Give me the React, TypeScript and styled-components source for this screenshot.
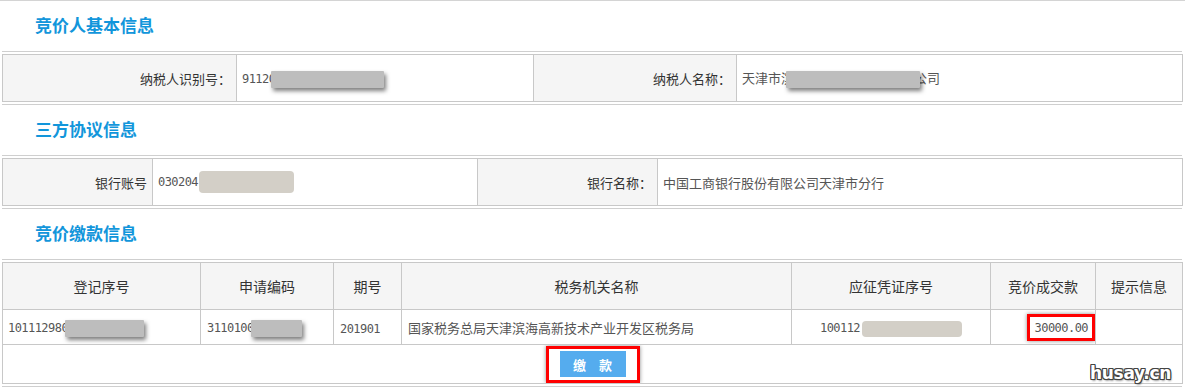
import React from "react";
import styled, { createGlobalStyle } from "styled-components";

// ______________________________________________________
// グローバル

const GlobalStyle = createGlobalStyle`
  html, body {
    margin: 0;
    padding: 0;
    background: #fff;
  }
  body {
    font-family: "Noto Sans CJK SC", "Noto Sans", sans-serif;
  }
`;

// ______________________________________________________
// スタイル

const Page = styled.div`
  position: relative;
  width: 1185px;
  height: 387px;
  box-sizing: border-box;
  overflow: hidden;
  border-top: 1px solid #d4d4d4;
`;

const Title = styled.h2`
  margin: 0;
  height: 50px;
  line-height: 48px;
  padding-left: 35px;
  font-size: 17px;
  font-weight: bold;
  color: #1296db;
`;

const Frame = styled.div`
  margin: 0 3px 0 2px;
  padding: 2px 0;
  border-top: 1px solid #cfcfcf;
  border-bottom: 1px solid #cfcfcf;
`;

const Table = styled.table`
  width: 100%;
  table-layout: fixed;
  border-collapse: collapse;
  font-size: 13px;
  color: #555;
`;

const Col = styled.col<{ $w: number }>`
  width: ${(p) => p.$w}px;
`;

const Row = styled.tr<{ $h: number }>`
  height: ${(p) => p.$h}px;
`;

const Cell = styled.td<{ $align?: "left" | "center" | "right"; $pad?: string; $top?: boolean }>`
  border: 1px solid #c8c8c8;
  padding: ${(p) => p.$pad ?? "0 5px"};
  text-align: ${(p) => p.$align ?? "left"};
  vertical-align: ${(p) => (p.$top ? "top" : "middle")};
  white-space: nowrap;
  overflow: hidden;
`;

const Label = styled(Cell)`
  background: #f5f5f5;
  color: #333;
  text-align: right;
`;

const Head = styled.th`
  border: 1px solid #c8c8c8;
  background: #f5f5f5;
  padding: 0;
  font-size: 14px;
  font-weight: normal;
  color: #333;
  text-align: center;
`;

const Num = styled.span`
  font-family: "DejaVu Sans Mono", "Liberation Mono", monospace;
  font-size: 12px;
  letter-spacing: -0.55px;
`;

const Mask = styled.span<{ $w: number; $h: number; $tone: "smoke" | "sand"; $ml?: number }>`
  display: inline-block;
  position: relative;
  vertical-align: middle;
  width: ${(p) => p.$w}px;
  height: ${(p) => p.$h}px;
  margin-left: ${(p) => p.$ml ?? 0}px;
  background: ${(p) => (p.$tone === "smoke" ? "#bdbdbd" : "#d3cfc7")};
  border-radius: ${(p) => (p.$tone === "smoke" ? "1px" : "4px")};
  box-shadow: ${(p) => (p.$tone === "smoke" ? "2px 3px 4px rgba(0,0,0,.5)" : "none")};
`;

const Marked = styled.span`
  display: inline-block;
  vertical-align: middle;
  border: 3px solid #ff0000;
  padding: 0 4px 0 5px;
  line-height: 20px;
  box-shadow: 0 0 4px rgba(0, 0, 0, 0.45);
`;

const PayFrame = styled.span`
  display: inline-block;
  margin-top: 1px;
  border: 3px solid #ff0000;
  padding: 2px 11px 3px;
  box-shadow: 0 0 4px rgba(0, 0, 0, 0.45);
`;

const PayButton = styled.button`
  display: block;
  width: 66px;
  height: 26px;
  padding: 0;
  border: 0;
  background: #55acee;
  color: #fff;
  font-family: "Noto Sans CJK SC", sans-serif;
  font-size: 13px;
  font-weight: bold;
  cursor: pointer;
`;

const Watermark = styled.div`
  position: absolute;
  right: 14px;
  bottom: 4px;
  font-family: "DejaVu Sans", "Liberation Sans", sans-serif;
  font-size: 17px;
  font-weight: bold;
  color: #fff;
  letter-spacing: -0.3px;
  text-shadow:
    1px 0 0 #444, -1px 0 0 #444, 0 1px 0 #444, 0 -1px 0 #444,
    1px 1px 0 #444, -1px -1px 0 #444, 1px -1px 0 #444, -1px 1px 0 #444,
    1px 2px 2px rgba(0, 0, 0, 0.4);
`;

// ______________________________________________________
// データ

const payCols = [198, 133, 68, 390, 199, 105, 87];
const payHeads = ["登记序号", "申请编码", "期号", "税务机关名称", "应征凭证序号", "竞价成交款", "提示信息"];

// ______________________________________________________
// コンポーネント

const App: React.FC = () => (
  <>
    <GlobalStyle />
    <Page>
      <Title>竞价人基本信息</Title>
      <Frame>
        <Table>
          <colgroup>
            {[234, 297, 203, 446].map((w, i) => <Col key={i} $w={w} />)}
          </colgroup>
          <tbody>
            <Row $h={47}>
              <Label>纳税人识别号：</Label>
              <Cell>
                <Num>91120</Num>
                <Mask $tone="smoke" $w={113} $h={17} $ml={-4} />
              </Cell>
              <Label>纳税人名称：</Label>
              <Cell>
                天津市滨
                <Mask $tone="smoke" $w={134} $h={17} $ml={-8} />
                <span style={{ marginLeft: -6 }}>公司</span>
              </Cell>
            </Row>
          </tbody>
        </Table>
      </Frame>

      <Title>三方协议信息</Title>
      <Frame>
        <Table>
          <colgroup>
            {[150, 325, 180, 525].map((w, i) => <Col key={i} $w={w} />)}
          </colgroup>
          <tbody>
            <Row $h={47}>
              <Label>银行账号</Label>
              <Cell>
                <Num>030204</Num>
                <Mask $tone="sand" $w={95} $h={22} $ml={1} />
              </Cell>
              <Label>银行名称：</Label>
              <Cell>中国工商银行股份有限公司天津市分行</Cell>
            </Row>
          </tbody>
        </Table>
      </Frame>

      <Title>竞价缴款信息</Title>
      <Frame>
        <Table>
          <colgroup>
            {payCols.map((w, i) => <Col key={i} $w={w} />)}
          </colgroup>
          <tbody>
            <Row $h={47}>
              {payHeads.map((h) => <Head key={h}>{h}</Head>)}
            </Row>
            <Row $h={35}>
              <Cell>
                <Num>101112980</Num>
                <Mask $tone="smoke" $w={79} $h={17} $ml={-3} />
              </Cell>
              <Cell $pad="0 6px">
                <Num>3110100</Num>
                <Mask $tone="smoke" $w={51} $h={17} $ml={-3} />
              </Cell>
              <Cell $pad="0 6px">
                <Num>201901</Num>
              </Cell>
              <Cell $pad="0 6px">国家税务总局天津滨海高新技术产业开发区税务局</Cell>
              <Cell $align="center">
                <Num>100112</Num>
                <Mask $tone="sand" $w={100} $h={16} $ml={2} />
              </Cell>
              <Cell $align="right" $pad="0">
                <Marked>
                  <Num>30000.00</Num>
                </Marked>
              </Cell>
              <Cell />
            </Row>
            <Row $h={39}>
              <Cell colSpan={7} $align="center" $pad="0" $top>
                <PayFrame>
                  <PayButton type="button">缴　款</PayButton>
                </PayFrame>
              </Cell>
            </Row>
          </tbody>
        </Table>
      </Frame>
      <Watermark>husay.cn</Watermark>
    </Page>
  </>
);

export default App;
